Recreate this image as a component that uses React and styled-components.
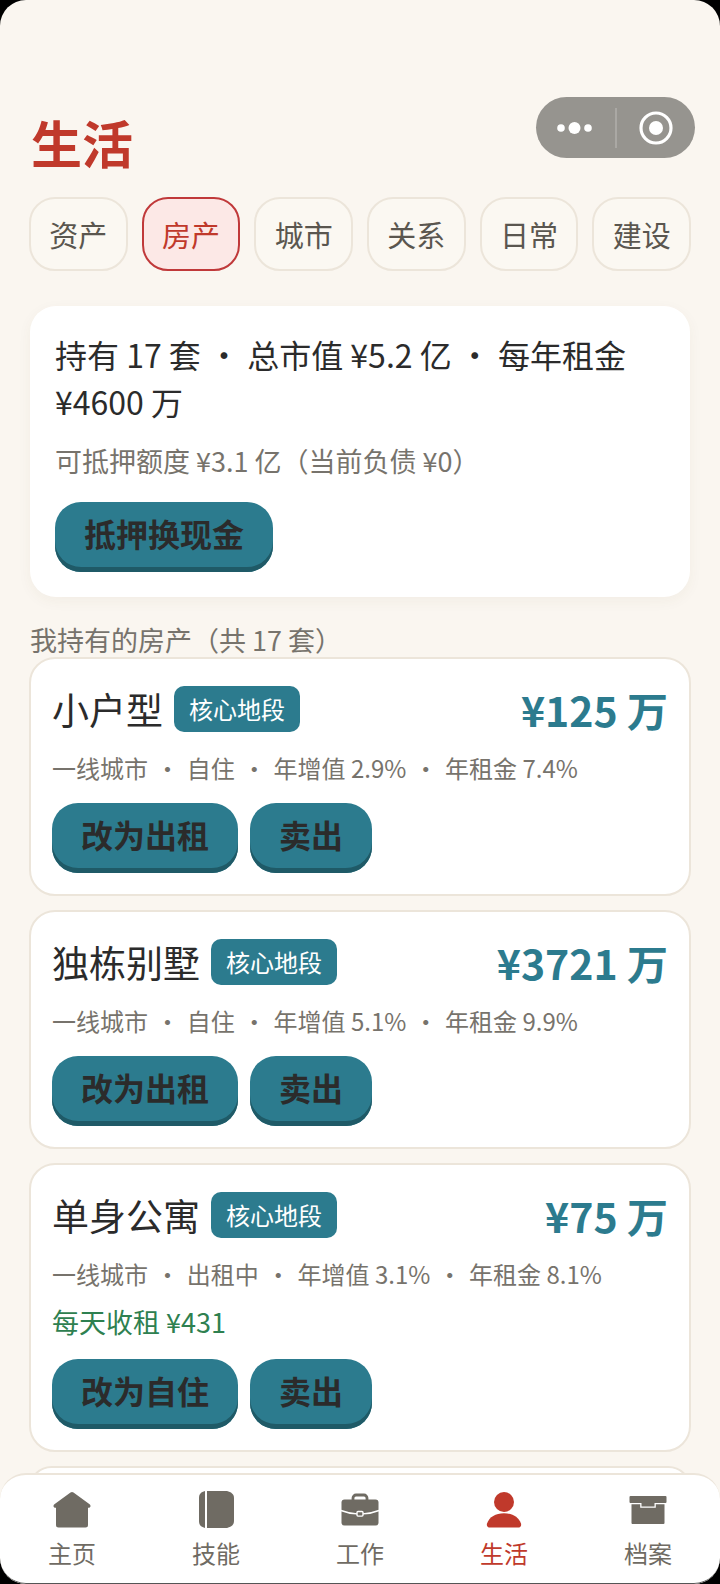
import React, { useState } from "react";
import styled, { createGlobalStyle } from "styled-components";

const GlobalStyle = createGlobalStyle`
  * {
    box-sizing: border-box;
  }

  body {
    margin: 0;
    background: #000;
    color: #2b2b2b;
    font-family: "Noto Sans CJK SC", "Noto Sans", sans-serif;
  }

  button {
    font-family: inherit;
    cursor: pointer;
  }
`;

const Screen = styled.div`
  height: 100vh;
  display: flex;
  flex-direction: column;
  overflow: hidden;
  border-radius: 26px;
  background: #faf6f0;
`;

const Header = styled.header`
  display: flex;
  align-items: flex-start;
  justify-content: space-between;
  padding: 97px 25px 0 31px;
`;

const PageTitle = styled.h1`
  margin: 7px 0 0;
  color: #c0392b;
  font-size: 51px;
  line-height: 76px;
  font-weight: 700;
`;

const Capsule = styled.div`
  display: flex;
  align-items: center;
  width: 159px;
  height: 61px;
  border-radius: 31px;
  background: #96948f;
`;

const CapsuleButton = styled.button`
  flex: 1;
  display: flex;
  align-items: center;
  justify-content: center;
  height: 100%;
  padding: 0;
  border: 0;
  background: transparent;
`;

const CapsuleLine = styled.span`
  width: 2px;
  height: 40px;
  background: #aaa8a4;
`;

const Tabs = styled.nav`
  display: grid;
  grid-template-columns: repeat(6, 1fr);
  gap: 14px;
  padding: 17px 29px 0;
`;

const Tab = styled.button`
  height: 74px;
  padding: 0;
  border: 2px solid ${({ $active }) => ($active ? "#c0393a" : "#ece5da")};
  border-radius: 26px;
  background: ${({ $active }) => ($active ? "#fce8e6" : "#fbf8f2")};
  color: ${({ $active }) => ($active ? "#c0392b" : "#5a564f")};
  font-size: 29px;
  line-height: 40px;
`;

const Content = styled.main`
  flex: 1;
  min-height: 0;
  overflow: hidden;
  padding: 35px 29px 0;
`;

const Summary = styled.section`
  margin: 0 1px;
  padding: 25px;
  border-radius: 26px;
  background: #fff;
  box-shadow: 0 4px 14px rgba(90, 70, 40, 0.05);
`;

const SummaryText = styled.p`
  margin: 0 0 16px;
  font-size: 32px;
  line-height: 47px;
`;

const SummaryHint = styled.p`
  margin: 0 0 21px;
  color: #77736c;
  font-size: 27px;
  line-height: 40px;
`;

const ActionButton = styled.button`
  height: 70px;
  padding: 0 29px 8px;
  border: 0;
  border-radius: 26px;
  background: #2c7b8e;
  box-shadow: inset 0 -5px 0 #1f5a67;
  color: #2b2b2b;
  font-size: 32px;
  line-height: 48px;
  font-weight: 700;
`;

const SectionLabel = styled.h2`
  margin: 23px 0 -3px 1px;
  color: #77736c;
  font-size: 27px;
  line-height: 40px;
  font-weight: 400;
`;

const Card = styled.article`
  margin-bottom: 14px;
  padding: 20px 21px 21px;
  border: 2px solid #ece5da;
  border-radius: 26px;
  background: #fff;
`;

const CardTop = styled.div`
  display: flex;
  align-items: center;
  height: 60px;
`;

const Name = styled.h3`
  margin: 0;
  font-size: 37px;
  line-height: 54px;
  font-weight: 400;
`;

const Badge = styled.span`
  height: 46px;
  margin-left: 11px;
  padding: 0 15px;
  border-radius: 10px;
  background: #2c7b8e;
  color: #fff;
  font-size: 24px;
  line-height: 46px;
`;

const Price = styled.strong`
  margin-left: auto;
  color: #2c7b8e;
  font-size: 41px;
  line-height: 60px;
`;

const Meta = styled.p`
  margin: 11px 0 0;
  color: #77736c;
  font-size: 24px;
  line-height: 36px;
`;

const Dot = styled.span`
  margin: 0 2px;
`;

const Income = styled.p`
  margin: 10px 0 0;
  color: #2e8050;
  font-size: 27px;
  line-height: 40px;
`;

const Actions = styled.div`
  display: flex;
  gap: 12px;
  margin-top: 17px;
`;

const BottomBar = styled.nav`
  display: grid;
  grid-template-columns: repeat(5, 1fr);
  height: 111px;
  border-top: 2px solid #ece5da;
  border-bottom: 1px solid #555;
  border-radius: 26px;
  background: #fff;
`;

const BarItem = styled.button`
  display: flex;
  flex-direction: column;
  align-items: center;
  padding: 14px 0 0;
  border: 0;
  background: transparent;
  color: ${({ $active }) => ($active ? "#c0392b" : "#6f6b63")};
  font-size: 24px;
  line-height: 36px;

  svg {
    margin-bottom: 6px;
  }
`;

const MoreIcon = () => (
  <svg width="38" height="14" viewBox="0 0 38 14" fill="#fff">
    <circle cx="5" cy="7" r="3.8" />
    <circle cx="18.5" cy="7" r="6" />
    <circle cx="32" cy="7" r="3.8" />
  </svg>
);

const CloseIcon = () => (
  <svg width="34" height="34" viewBox="0 0 34 34" fill="none">
    <circle cx="17" cy="17" r="15" stroke="#fff" strokeWidth="3.2" />
    <circle cx="17" cy="17" r="7" fill="#fff" />
  </svg>
);

const HomeIcon = () => (
  <svg width="40" height="40" viewBox="0 0 40 40" fill="currentColor">
    <path d="M18.5 3.6a2.4 2.4 0 0 1 3 0L37.6 15.200c1.600 1.400 1 3.600-1.200 3.600H36V36a2.500 2.500 0 0 1-2.500 2.500h-27A2.500 2.500 0 0 1 4 36V18.800h-.4c-2.200 0-2.800-2.200-1.200-3.600z" />
  </svg>
);

const BookIcon = () => (
  <svg width="40" height="40" viewBox="0 0 40 40" fill="currentColor">
    <path d="M9 2v37C5 38 3 36 3 32V9c0-4 2-6 6-7z" />
    <path d="M11 2H31c4 1 7 3 7 7v23c0 4-3 6-7 7H11z" />
  </svg>
);

const CaseIcon = () => (
  <svg width="40" height="40" viewBox="0 0 40 40" fill="currentColor">
    <path
      d="M13 12V9a3 3 0 0 1 3-3h8a3 3 0 0 1 3 3v3"
      fill="none"
      stroke="currentColor"
      strokeWidth="2.8"
    />
    <rect x="1.5" y="10.5" width="37" height="26" rx="3" />
    <path
      d="M1 21.5c5 2 10 3 16 3.4M23 24.9c6-.4 11-1.4 16-3.4"
      fill="none"
      stroke="#fff"
      strokeWidth="1.4"
    />
    <rect
      x="17"
      y="22.5"
      width="6"
      height="4.6"
      rx="1"
      fill="none"
      stroke="#fff"
      strokeWidth="1.4"
    />
  </svg>
);

const PersonIcon = () => (
  <svg width="40" height="40" viewBox="0 0 40 40" fill="currentColor">
    <circle cx="20" cy="13" r="10" />
    <path d="M3 34.5C5.5 28 11.5 24.3 20 24.3S34.5 28 37 34.5c.6 2.4-.6 4-3 4H6c-2.4 0-3.6-1.6-3-4z" />
  </svg>
);

const ArchiveIcon = () => (
  <svg width="40" height="40" viewBox="0 0 40 40" fill="currentColor">
    <path d="M2.5 7h35a1 1 0 0 1 1 1v5a1 1 0 0 1-1 1h-11v3.5h-13V14h-11a1 1 0 0 1-1-1V8a1 1 0 0 1 1-1z" />
    <path d="M3.5 15.3h8.7v3.5h15.6v-3.5h8.7V34a1 1 0 0 1-1 1h-31a1 1 0 0 1-1-1z" />
  </svg>
);

const tabs = ["资产", "房产", "城市", "关系", "日常", "建设"];

const barItems = [
  { label: "主页", icon: <HomeIcon /> },
  { label: "技能", icon: <BookIcon /> },
  { label: "工作", icon: <CaseIcon /> },
  { label: "生活", icon: <PersonIcon /> },
  { label: "档案", icon: <ArchiveIcon /> },
];

const houses = [
  {
    id: 1,
    name: "小户型",
    price: "¥125 万",
    meta: ["一线城市", "自住", "年增值 2.9%", "年租金 7.4%"],
    action: "改为出租",
  },
  {
    id: 2,
    name: "独栋别墅",
    price: "¥3721 万",
    meta: ["一线城市", "自住", "年增值 5.1%", "年租金 9.9%"],
    action: "改为出租",
  },
  {
    id: 3,
    name: "单身公寓",
    price: "¥75 万",
    meta: ["一线城市", "出租中", "年增值 3.1%", "年租金 8.1%"],
    income: "每天收租 ¥431",
    action: "改为自住",
  },
];

const HouseCard = ({ house }) => (
  <Card>
    <CardTop>
      <Name>{house.name}</Name>
      <Badge>核心地段</Badge>
      <Price>{house.price}</Price>
    </CardTop>
    <Meta>
      {house.meta.map((item, index) => (
        <React.Fragment key={item}>
          {index > 0 && <Dot> · </Dot>}
          {item}
        </React.Fragment>
      ))}
    </Meta>
    {house.income && <Income>{house.income}</Income>}
    <Actions>
      <ActionButton>{house.action}</ActionButton>
      <ActionButton>卖出</ActionButton>
    </Actions>
  </Card>
);

const App = () => {
  const [tab, setTab] = useState("房产");
  const [page, setPage] = useState("生活");

  return (
    <>
      <GlobalStyle />
      <Screen lang="zh-CN">
        <Header>
          <PageTitle>生活</PageTitle>
          <Capsule>
            <CapsuleButton aria-label="更多">
              <MoreIcon />
            </CapsuleButton>
            <CapsuleLine />
            <CapsuleButton aria-label="关闭">
              <CloseIcon />
            </CapsuleButton>
          </Capsule>
        </Header>
        <Tabs>
          {tabs.map((name) => (
            <Tab key={name} $active={name === tab} onClick={() => setTab(name)}>
              {name}
            </Tab>
          ))}
        </Tabs>
        <Content>
          <Summary>
            <SummaryText>
              持有 17 套 · 总市值 ¥5.2 亿 · 每年租金 ¥4600 万
            </SummaryText>
            <SummaryHint>可抵押额度 ¥3.1 亿（当前负债 ¥0）</SummaryHint>
            <ActionButton>抵押换现金</ActionButton>
          </Summary>
          <SectionLabel>我持有的房产（共 17 套）</SectionLabel>
          {houses.map((house) => (
            <HouseCard key={house.id} house={house} />
          ))}
          <Card />
        </Content>
        <BottomBar>
          {barItems.map(({ label, icon }) => (
            <BarItem
              key={label}
              $active={label === page}
              onClick={() => setPage(label)}
            >
              {icon}
              {label}
            </BarItem>
          ))}
        </BottomBar>
      </Screen>
    </>
  );
};

export default App;
